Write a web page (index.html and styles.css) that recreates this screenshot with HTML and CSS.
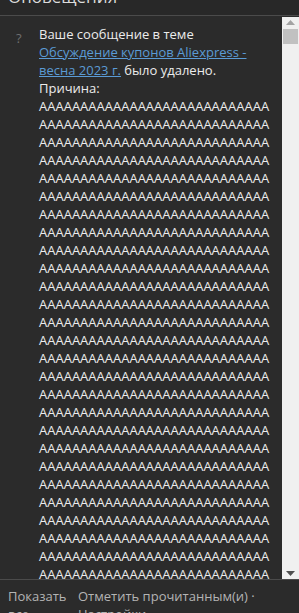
FILE: index.html
```html
<!DOCTYPE html>
<html lang="ru">
<head>
    <meta charset="UTF-8">
    <meta name="viewport" content="width=device-width, initial-scale=1.0">
    <title>Оповещения</title>
    <link rel="stylesheet" href="styles.css">
</head>
<body>
    <div class="panel">
        <div class="header">
            <h3 class="title">Оповещения</h3>
        </div>

        <div class="body">
            <div class="list">
                <div class="alert">
                    <div class="alert-icon">?</div>
                    <div class="alert-text">
                        Ваше сообщение в теме
                        <a href="#" class="link">Обсуждение купонов Aliexpress - весна 2023 г.</a>
                        было удалено.<br>
                        Причина:
                        <span class="reason" id="reason"></span>
                    </div>
                </div>
            </div>

            <div class="scrollbar">
                <div class="scroll-btn">
                    <svg width="9" height="5" viewBox="0 0 9 5"><path d="M4.5 0 L9 5 L0 5 Z" fill="#a3a3a3"/></svg>
                </div>
                <div class="scroll-track">
                    <div class="scroll-thumb"></div>
                </div>
                <div class="scroll-btn">
                    <svg width="9" height="5" viewBox="0 0 9 5"><path d="M0 0 L9 0 L4.5 5 Z" fill="#505050"/></svg>
                </div>
            </div>
        </div>

        <div class="footer">
            <a href="#" class="footer-link footer-all">Показать все</a>
            <div class="footer-links">
                <a href="#" class="footer-link">Отметить прочитанным(и)</a>&nbsp;·
                <a href="#" class="footer-link">Настройки</a>
            </div>
        </div>
    </div>

    <script>
        // Причина — длинная строка из "А"
        document.getElementById('reason').textContent = 'А'.repeat(900);
    </script>
</body>
</html>
```

FILE: styles.css
```css
* {
    margin: 0;
    padding: 0;
    box-sizing: border-box;
}

body {
    font-family: 'Open Sans', 'Noto Sans', sans-serif;
    font-size: 13px;
    line-height: 18px;
    background: #2b2b2b;
    height: 100vh;
    overflow: hidden;
}

.panel {
    height: 100vh;
    display: flex;
    flex-direction: column;
}

.header {
    height: 16px;
    overflow: hidden;
    background: #282828;
    border-bottom: 1px solid #4b4b4b;
    padding-left: 8px;
}

.title {
    color: #dcdcdc;
    font-size: 17px;
    font-weight: 400;
    line-height: 20px;
    margin-top: -13px;
}

.body {
    flex: 1;
    display: flex;
    min-height: 0;
}

.list {
    flex: 1;
    overflow: hidden;
    padding: 9px 0 0 0;
}

.alert {
    display: flex;
}

.alert-icon {
    width: 39px;
    padding-left: 16px;
    padding-top: 4px;
    color: #6f6f6f;
    font-size: 13px;
}

.alert-text {
    width: 233px;
    color: #ececec;
}

.reason {
    display: block;
    word-break: break-all;
}

.link {
    color: #5b9bd5;
    text-decoration: underline;
}

.scrollbar {
    width: 17px;
    margin-top: 1px;
    background: #f0f0f0;
    display: flex;
    flex-direction: column;
}

.scroll-btn {
    height: 11px;
    display: flex;
    align-items: center;
    justify-content: center;
}

.scroll-track {
    flex: 1;
    padding: 0 1px;
}

.scroll-thumb {
    height: 15px;
    margin-top: 1px;
    background: #c1c1c1;
}

.footer {
    height: 34px;
    overflow: hidden;
    border-top: 1px solid #4b4b4b;
    background: #2b2b2b;
    display: flex;
    gap: 14px;
    padding: 7px 0 0 8px;
    color: #b4b4b4;
}

.footer-link {
    color: #b4b4b4;
    text-decoration: none;
}

.footer-all {
    width: 56px;
}

.footer-links {
    width: 180px;
}
```
